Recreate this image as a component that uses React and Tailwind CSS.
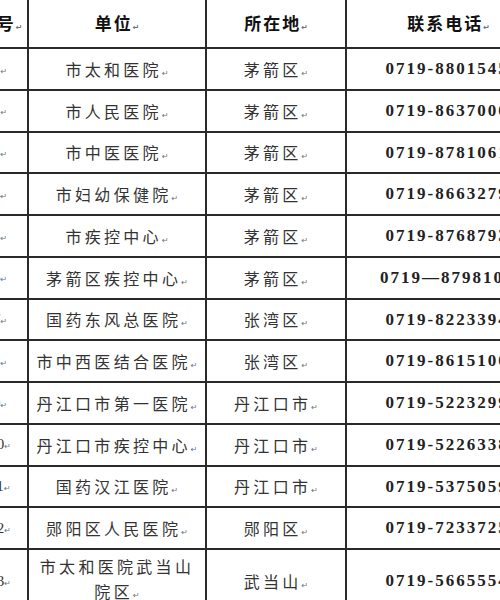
import React from "react";

const rows = [
  ["1", "市太和医院", "茅箭区", "0719-8801545"],
  ["2", "市人民医院", "茅箭区", "0719-8637000"],
  ["3", "市中医医院", "茅箭区", "0719-8781061"],
  ["4", "市妇幼保健院", "茅箭区", "0719-8663279"],
  ["5", "市疾控中心", "茅箭区", "0719-8768793"],
  ["6", "茅箭区疾控中心", "茅箭区", "0719—8798100"],
  ["7", "国药东风总医院", "张湾区", "0719-8223394"],
  ["8", "市中西医结合医院", "张湾区", "0719-8615100"],
  ["9", "丹江口市第一医院", "丹江口市", "0719-5223299"],
  ["10", "丹江口市疾控中心", "丹江口市", "0719-5226338"],
  ["11", "国药汉江医院", "丹江口市", "0719-5375059"],
  ["12", "郧阳区人民医院", "郧阳区", "0719-7233725"],
];

const Ret = () => (
  <span className="text-[8px] text-gray-500 tracking-normal align-baseline font-['DejaVu_Sans',sans-serif]">↵</span>
);

const cell = "border-2 border-[#2a2a2a] text-center align-middle p-0";
const cjk = "font-['Noto_Sans_CJK_SC',sans-serif]";
const serif = "font-['Liberation_Serif','Noto_Sans_CJK_SC',serif]";

export default function App() {
  return (
    <div className="w-[500px] h-[600px] overflow-hidden bg-white">
      <table className="table-fixed border-collapse ml-[-29px] mt-[-2px] w-[579px]">
        <colgroup>
          <col className="w-[56px]" />
          <col className="w-[178px]" />
          <col className="w-[140px]" />
          <col className="w-[205px]" />
        </colgroup>
        <thead>
          <tr className="h-[50px]">
            {["序号", "单位", "所在地", "联系电话"].map((h) => (
              <th key={h} className={`${cell} ${cjk} text-[17px] font-bold text-[#111] tracking-[2px] border-t-0`}>
                {h}
                <Ret />
              </th>
            ))}
          </tr>
        </thead>
        <tbody>
          {rows.map((r) => (
            <tr key={r[0]} className="h-[41.75px]">
              <td className={`${cell} ${serif} text-[15px] text-[#333]`}>
                {r[0]}
                <Ret />
              </td>
              <td className={`${cell} ${cjk} text-[16px] text-[#333] tracking-[3.3px]`}>
                {r[1]}
                <Ret />
              </td>
              <td className={`${cell} ${cjk} text-[16px] text-[#333] tracking-[3.3px]`}>
                {r[2]}
                <Ret />
              </td>
              <td className={`${cell} ${serif} text-[17px] font-bold text-[#222] tracking-[2px] whitespace-nowrap pl-[4px]`}>
                {r[3]}
                <Ret />
              </td>
            </tr>
          ))}
          <tr className="h-[64px]">
            <td className={`${cell} ${serif} text-[15px] text-[#333]`}>
              13
              <Ret />
            </td>
            <td className={`${cell} ${cjk} text-[16px] text-[#333] tracking-[3.3px] leading-[25px]`}>
              市太和医院武当山
              <br />
              院区
              <Ret />
            </td>
            <td className={`${cell} ${cjk} text-[16px] text-[#333] tracking-[3.3px]`}>
              武当山
              <Ret />
            </td>
            <td className={`${cell} ${serif} text-[17px] font-bold text-[#222] tracking-[2px] whitespace-nowrap pl-[4px]`}>
              0719-5665554
              <Ret />
            </td>
          </tr>
        </tbody>
      </table>
    </div>
  );
}
